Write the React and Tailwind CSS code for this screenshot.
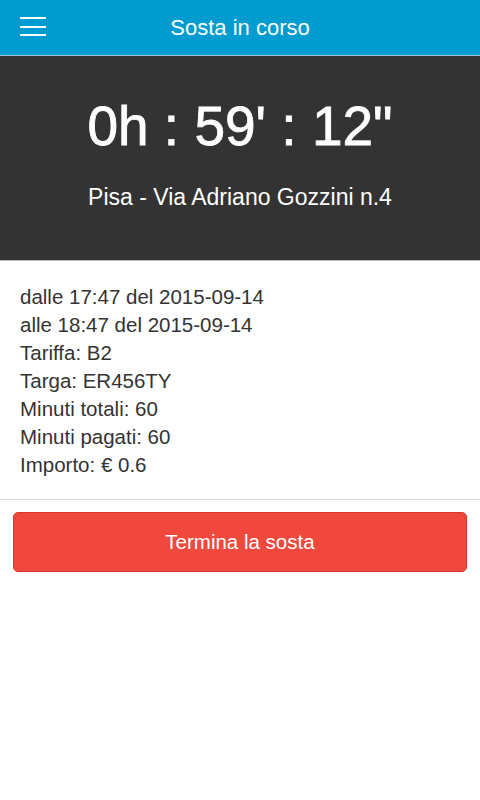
export default function App() {
  const rows = [
    "dalle 17:47 del 2015-09-14",
    "alle 18:47 del 2015-09-14",
    "Tariffa: B2",
    "Targa: ER456TY",
    "Minuti totali: 60",
    "Minuti pagati: 60",
    "Importo: € 0.6",
  ];
  return (
    <div className="w-[480px] h-[800px] bg-white" style={{ fontFamily: '"Liberation Sans", Arial, sans-serif' }}>
      <header className="h-[56px] bg-[#009bcf] border-b border-[#9fc6d6] flex items-center relative">
        <div className="absolute left-[20px] top-[17px] flex flex-col gap-[6.5px]">
          <span className="block w-[26px] h-[2px] bg-white" />
          <span className="block w-[26px] h-[2px] bg-white" />
          <span className="block w-[26px] h-[2px] bg-white" />
        </div>
        <h1 className="w-full text-center text-white text-[22px] leading-none">Sosta in corso</h1>
      </header>
      <section className="h-[205px] bg-[#333333] border-b border-[#b8b8b8] flex flex-col items-center text-white">
        <div className="mt-[43px] text-[55px] leading-none [-webkit-text-stroke:0.8px_white]">0h : 59' : 12"</div>
        <div className="mt-[32px] text-[23px] leading-none">Pisa - Via Adriano Gozzini n.4</div>
      </section>
      <section className="px-[20px] pt-[22px] pb-[20px] border-b border-[#d6d6d6] text-[#333] text-[20.5px] leading-[28px]">
        {rows.map((r) => (
          <div key={r}>{r}</div>
        ))}
      </section>
      <div className="px-[13px] pt-[12px]">
        <button className="w-full h-[60px] rounded-[5px] bg-[#f0483d] border border-[#d9362c] text-white text-[20.5px]">
          Termina la sosta
        </button>
      </div>
    </div>
  );
}
